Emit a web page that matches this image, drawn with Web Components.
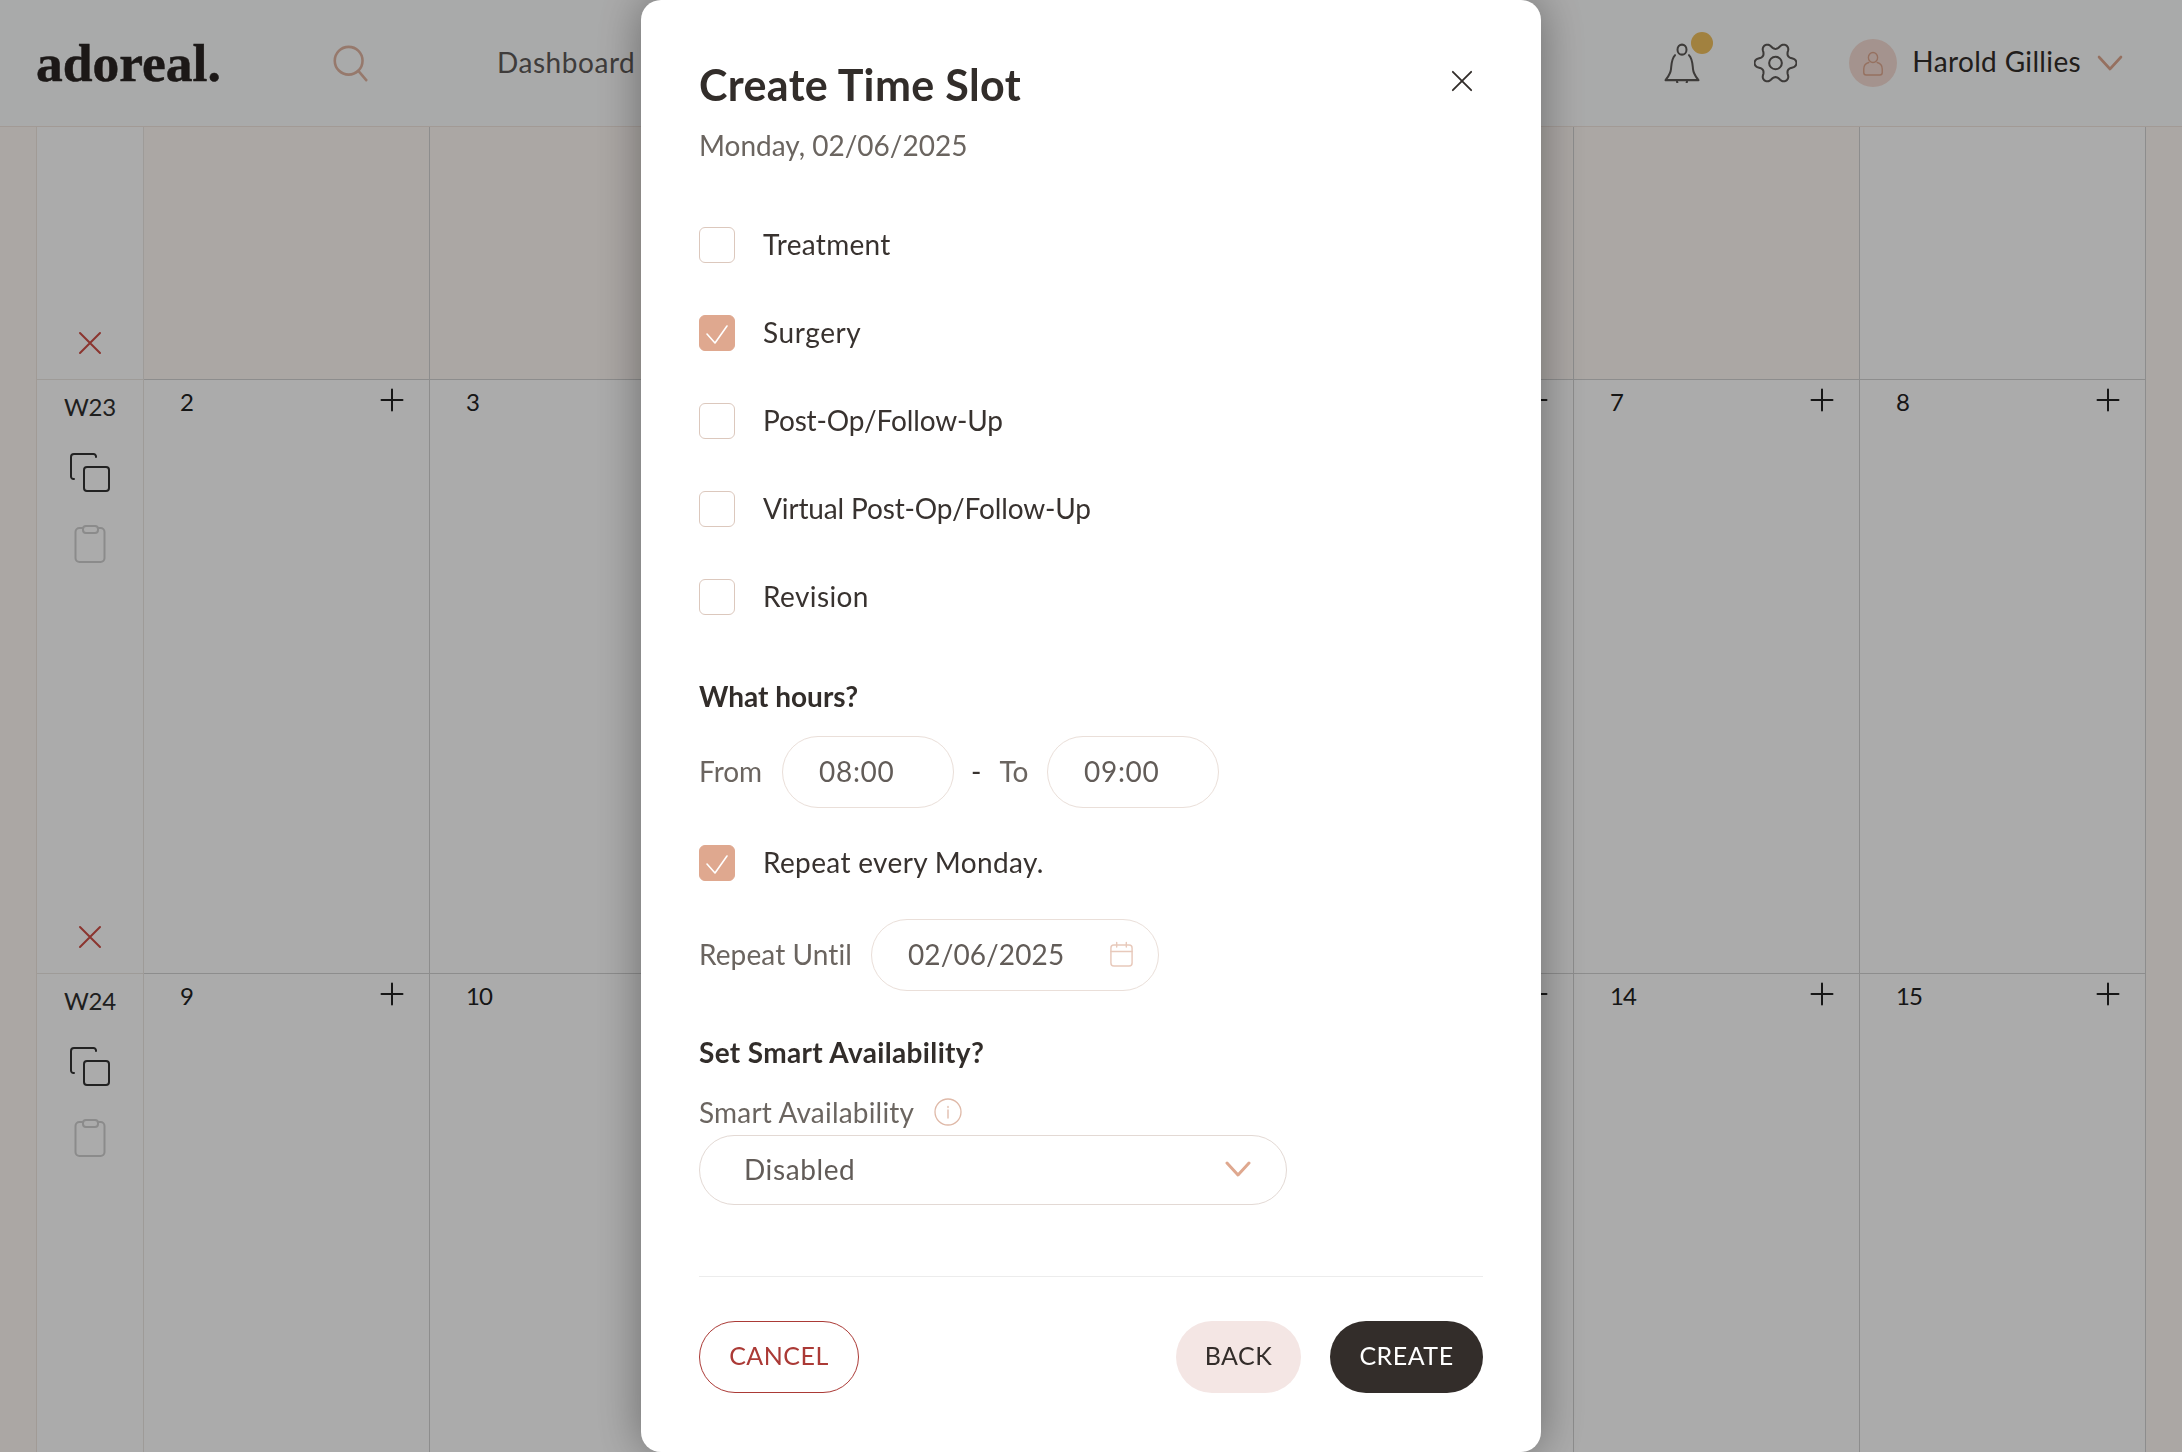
<!DOCTYPE html>
<html lang="en">
<head>
<meta charset="utf-8">
<title>Create Time Slot</title>
<style>
    html, body { margin: 0; padding: 0; background: #fff; height: 1452px; overflow: hidden; }
    body { width: 2182px; font-family: Lato, "Open Sans", sans-serif; color: #35302d; }
</style>
</head>
<body>
<app-header></app-header>
<cal-grid>
    <cal-strip></cal-strip>
    <cal-strip side="right"></cal-strip>

    <cal-week></cal-week>
    <cal-day past></cal-day><cal-day past></cal-day><cal-day past></cal-day><cal-day past></cal-day><cal-day past></cal-day><cal-day past></cal-day>
    <cal-day></cal-day>

    <cal-week label="W23"></cal-week>
    <cal-day num="2"></cal-day><cal-day num="3"></cal-day><cal-day num="4"></cal-day><cal-day num="5"></cal-day><cal-day num="6"></cal-day><cal-day num="7"></cal-day><cal-day num="8"></cal-day>

    <cal-week label="W24"></cal-week>
    <cal-day num="9"></cal-day><cal-day num="10"></cal-day><cal-day num="11"></cal-day><cal-day num="12"></cal-day><cal-day num="13"></cal-day><cal-day num="14"></cal-day><cal-day num="15"></cal-day>
</cal-grid>
<slot-modal></slot-modal>

<script>
function gearPath() {
    // wavy six lobe outline, same as the settings icon
    let d = '';
    for (let i = 0; i <= 120; i++) {
        const a = i / 120 * Math.PI * 2;
        const c = Math.cos(6 * a);
        const r = 17.3 + 3.2 * Math.sign(c) * Math.pow(Math.abs(c), 0.7);
        d += (i ? 'L' : 'M') + (21 + r * Math.cos(a)).toFixed(2) + ' ' + (21 + r * Math.sin(a)).toFixed(2);
    }
    return d + 'Z';
}

const ICONS = {
    search: [40, '<circle cx="18" cy="17" r="15"/><path d="M28.5 28 37 38"/>'],
    bell: [36, '<circle cx="18" cy="6" r="4.5"/><path d="M11 11C7.500 14 7.500 19 7 23.500 6.500 28 3.500 31 1.500 33.500H34.500C32.500 31 29.500 28 29 23.500 28.500 19 28.500 14 25 11"/><path d="M13 34a5 5 0 0 0 10 0"/>'],
    gear: [42, '<path d="' + gearPath() + '"/><circle cx="21" cy="21" r="6.200"/>'],
    user: [26, '<circle cx="13" cy="7.500" r="5"/><path d="M8.500 12.500C4 13.500 3 16 3 19v3.500A2.500 2.500 0 0 0 5.500 25h15a2.500 2.500 0 0 0 2.500-2.500V19c0-3-1-5.500-5.500-6.500"/>'],
    chevron: [26, '<path d="M2 7 13 19 24 7"/>'],
    close: [24, '<path d="M2 2 22 22M22 2 2 22"/>'],
    plus: [24, '<path d="M12 1.500V22.500M1.500 12H22.500"/>'],
    copy: [40, '<path d="M26 5V4.500A2.500 2.500 0 0 0 23.500 2H4A3 3 0 0 0 1 5V24.500A2.500 2.500 0 0 0 3.500 27H4"/><rect x="14" y="15" width="25" height="24" rx="3"/>'],
    clipboard: [40, '<rect x="5.500" y="4" width="29" height="34" rx="4"/><rect x="13" y="2" width="15" height="7" rx="3" fill="#fff"/>'],
    check: [36, '<path d="M8 19 16 28 28 11"/>'],
    calendar: [26, '<rect x="2" y="4" width="22" height="21" rx="3"/><path d="M2 10.500H24M8 1.500V6M18 1.500V6"/>'],
    info: [28, '<circle cx="14" cy="14" r="13"/><path d="M14 12V20M14 8.500V9.500"/>']
};

class UiIcon extends HTMLElement {
    connectedCallback() {
        const [box, body] = ICONS[this.getAttribute('name')];
        const w = this.getAttribute('w') || box;
        const h = this.getAttribute('h') || w;
        const sw = this.getAttribute('sw') || 2;
        this.attachShadow({ mode: 'open' }).innerHTML = `
            <style>
                :host { display: inline-flex; flex: none; color: ${this.getAttribute('color') || 'currentColor'}; }
                svg { display: block; fill: none; stroke: currentColor; stroke-linecap: round; stroke-linejoin: round; }
            </style>
            <svg width="${w}" height="${h}" viewBox="0 0 ${box} ${box}" preserveAspectRatio="none" stroke-width="${sw}">${body}</svg>`;
    }
}
customElements.define('ui-icon', UiIcon);

class AppHeader extends HTMLElement {
    constructor() {
        super();
        this.attachShadow({ mode: 'open' }).innerHTML = `
            <style>
                :host { display: flex; align-items: center; box-sizing: border-box; height: 127px; padding: 0 59px 0 36px; background: #fdfefe; border-bottom: 1px solid #f2e6df; }
                .logo { font: 700 53.500px/1 "Liberation Serif", serif; color: #2a2523; -webkit-text-stroke: .5px #2a2523; width: 183px; white-space: nowrap; padding-top: 2px; }
                .search { margin-left: 113px; }
                .nav { margin-left: 128px; font-size: 28px; letter-spacing: .55px; color: #5e5a58; padding-bottom: 3px; }
                .right { margin-left: auto; display: flex; align-items: center; }
                .bell { position: relative; display: flex; }
                .dot { position: absolute; left: 27px; top: -11px; width: 22px; height: 22px; border-radius: 50%; background: #f0c05f; }
                .gear { margin-left: 54px; }
                .avatar { margin-left: 52px; width: 48px; height: 48px; border-radius: 50%; background: #f5dcd4; display: flex; align-items: center; justify-content: center; }
                .name { margin-left: 15px; font-size: 28px; letter-spacing: .35px; color: #322d2a; padding-bottom: 5px; }
                .chev { margin-left: 16px; }
            </style>
            <div class="logo">adoreal.</div>
            <ui-icon class="search" name="search" w="37" h="37" sw="2.800" color="#e0b5a2"></ui-icon>
            <div class="nav">Dashboard</div>
            <div class="right">
                <div class="bell"><ui-icon name="bell" w="36" h="40" color="#5c5856"></ui-icon><span class="dot"></span></div>
                <ui-icon class="gear" name="gear" w="43" h="42" color="#5c5856"></ui-icon>
                <div class="avatar"><ui-icon name="user" w="24" h="26" sw="1.500" color="#dfa88f"></ui-icon></div>
                <div class="name">Harold Gillies</div>
                <ui-icon class="chev" name="chevron" w="26" h="26" sw="2.600" color="#dfa88f"></ui-icon>
            </div>`;
    }
}
customElements.define('app-header', AppHeader);

class CalGrid extends HTMLElement {
    constructor() {
        super();
        this.attachShadow({ mode: 'open' }).innerHTML = `
            <style>
                :host { display: grid; height: 1325px; overflow: hidden; grid-template-columns: 37px 107px repeat(7, 286px) 36px; grid-template-rows: 253px 594px 594px; }
            </style>
            <slot></slot>`;
    }
}
customElements.define('cal-grid', CalGrid);

class CalStrip extends HTMLElement {
    constructor() {
        super();
        this.attachShadow({ mode: 'open' }).innerHTML = `
            <style>
                :host { display: block; grid-row: 1 / 4; grid-column: 1; background: #fff9f5; border-right: 1px solid #f0e7e0; }
                :host([side="right"]) { grid-column: 10; border-right: 0; }
            </style>`;
    }
}
customElements.define('cal-strip', CalStrip);

class CalWeek extends HTMLElement {
    connectedCallback() {
        const label = this.getAttribute('label');
        this.attachShadow({ mode: 'open' }).innerHTML = `
            <style>
                :host { display: flex; flex-direction: column; align-items: center; box-sizing: border-box; padding: 11px 0 24px; background: #fff; border-right: 1px solid #ece7e3; border-bottom: 1px solid #ece7e3; }
                .label { font-size: 24px; line-height: 32px; letter-spacing: -.2px; color: #2f2f2f; }
                .copy { margin-top: 29px; }
                .paste { margin-top: 32px; }
                .del { margin-top: auto; }
            </style>
            ${label ? `<div class="label">${label}</div>
            <ui-icon class="copy" name="copy" w="40" h="40" color="#333"></ui-icon>
            <ui-icon class="paste" name="clipboard" w="40" h="40" color="#cfcfcf"></ui-icon>` : ''}
            <ui-icon class="del" name="close" w="24" h="24" color="#cf4f46"></ui-icon>`;
    }
}
customElements.define('cal-week', CalWeek);

class CalDay extends HTMLElement {
    connectedCallback() {
        const num = this.getAttribute('num');
        this.attachShadow({ mode: 'open' }).innerHTML = `
            <style>
                :host { display: flex; justify-content: space-between; align-items: flex-start; box-sizing: border-box; padding: 4px 25px 0 36px; background: #fff; border-right: 1px solid #d2d2d2; border-bottom: 1px solid #d2d2d2; }
                :host([past]) { background: #fff9f5; }
                .num { font-size: 24px; line-height: 36px; letter-spacing: -1px; color: #222; }
                ui-icon { margin-top: 4px; }
            </style>
            ${num ? `<div class="num">${num}</div><ui-icon name="plus" w="24" h="24" color="#222"></ui-icon>` : ''}`;
    }
}
customElements.define('cal-day', CalDay);

class CheckRow extends HTMLElement {
    connectedCallback() {
        const on = this.hasAttribute('checked');
        this.attachShadow({ mode: 'open' }).innerHTML = `
            <style>
                :host { display: flex; align-items: center; height: 36px; font-size: 28px; color: #38322f; }
                .box { box-sizing: border-box; width: 36px; height: 36px; border-radius: 6px; border: 1px solid #dcc8bd; background: #fff; display: flex; }
                .box.on { background: #dfa88f; border-color: #dfa88f; }
                .text { margin-left: 28px; padding-bottom: 2px; }
                ui-icon { margin: -1px; }
            </style>
            <span class="box ${on ? 'on' : ''}">${on ? '<ui-icon name="check" w="36" h="36" sw="1.600" color="#fff"></ui-icon>' : ''}</span>
            <span class="text"><slot></slot></span>`;
    }
}
customElements.define('check-row', CheckRow);

class PillField extends HTMLElement {
    constructor() {
        super();
        this.attachShadow({ mode: 'open' }).innerHTML = `
            <style>
                :host { display: flex; align-items: center; justify-content: space-between; box-sizing: border-box; height: 72px; padding: 0 24px 3px 36px; border: 1px solid #eadfd9; border-radius: 36px; background: #fff; font-size: 28px; letter-spacing: .7px; color: #625c58; }
            </style>
            <span><slot></slot></span>
            <slot name="icon"></slot>`;
    }
}
customElements.define('pill-field', PillField);

class ActionButton extends HTMLElement {
    constructor() {
        super();
        this.attachShadow({ mode: 'open' }).innerHTML = `
            <style>
                :host { display: inline-flex; align-items: center; justify-content: center; box-sizing: border-box; height: 72px; padding-bottom: 5px; border-radius: 36px; font-size: 25px; letter-spacing: .5px; }
                :host([kind="cancel"]) { width: 160px; border: 1px solid #ab3a36; color: #ab3a36; background: #fff; }
                :host([kind="back"]) { width: 125px; background: #f4e6e4; color: #332d2a; }
                :host([kind="create"]) { width: 153px; margin-left: 29px; background: #332d2a; color: #fff; }
            </style>
            <slot></slot>`;
    }
}
customElements.define('action-button', ActionButton);

class SlotModal extends HTMLElement {
    constructor() {
        super();
        this.attachShadow({ mode: 'open' }).innerHTML = `
            <style>
                :host { position: fixed; inset: 0; display: flex; justify-content: center; background: rgba(0, 0, 0, .33); }
                .panel { box-sizing: border-box; width: 900px; height: 1452px; padding: 65px 58px 0; background: #fff; border-radius: 20px; box-shadow: 0 0 46px rgba(0, 0, 0, .38); }
                .top { display: flex; justify-content: space-between; align-items: flex-start; }
                h1 { margin: 0; font-size: 43px; line-height: 40px; font-weight: 700; letter-spacing: .35px; color: #322d2a; }
                .close { margin: 5px 10px 0 0; }
                .sub { margin-top: 24px; font-size: 28px; line-height: 32px; color: #6b6560; }
                .checks { margin-top: 66px; display: flex; flex-direction: column; gap: 52px; }
                h2 { margin: 65px 0 0; padding-bottom: 1px; font-size: 28px; line-height: 32px; font-weight: 700; color: #322d2a; }
                .row { display: flex; align-items: center; font-size: 28px; color: #6b6560; }
                .row > span { padding-bottom: 3px; }
                .hours { margin-top: 23px; }
                .from { width: 83px; }
                .hours pill-field { width: 172px; }
                .dash { width: 93px; padding-left: 17px; box-sizing: border-box; color: #38322f; }
                .dash b { font-weight: 400; margin-right: 18px; }
                .repeat { margin-top: 37px; letter-spacing: .35px; }
                .until { margin-top: 38px; }
                .until .lab { width: 172px; letter-spacing: .1px; }
                .until pill-field { width: 288px; letter-spacing: .1px; }
                h2.smart { margin-top: 45px; padding-bottom: 0; letter-spacing: .35px; }
                .smart-label { margin-top: 28px; line-height: 32px; display: flex; align-items: center; font-size: 28px; letter-spacing: .2px; color: #6b6560; }
                .smart-label ui-icon { margin-left: 20px; }
                .select { margin-top: 7px; display: flex; align-items: center; justify-content: space-between; box-sizing: border-box; width: 588px; height: 70px; padding: 0 35px 3px 44px; border: 1px solid #e3d9d4; border-radius: 35px; font-size: 28px; letter-spacing: .6px; color: #625c58; }
                hr { margin: 71px 0 0; border: 0; border-top: 1px solid #ececec; }
                .actions { margin-top: 44px; display: flex; align-items: center; }
                .spacer { flex: 1; }
            </style>
            <div class="panel">
                <div class="top">
                    <h1>Create Time Slot</h1>
                    <ui-icon class="close" name="close" w="22" h="22" color="#322d2a"></ui-icon>
                </div>
                <div class="sub">Monday, 02/06/2025</div>
                <div class="checks">
                    <check-row style="letter-spacing:.3px">Treatment</check-row>
                    <check-row checked style="letter-spacing:.6px">Surgery</check-row>
                    <check-row style="letter-spacing:-.15px">Post-Op/Follow-Up</check-row>
                    <check-row style="letter-spacing:-.15px">Virtual Post-Op/Follow-Up</check-row>
                    <check-row style="letter-spacing:.4px">Revision</check-row>
                </div>
                <h2>What hours?</h2>
                <div class="row hours">
                    <span class="from">From</span>
                    <pill-field>08:00</pill-field>
                    <span class="dash"><b>-</b><span style="color:#6b6560">To</span></span>
                    <pill-field>09:00</pill-field>
                </div>
                <check-row class="repeat" checked>Repeat every Monday.</check-row>
                <div class="row until">
                    <span class="lab">Repeat Until</span>
                    <pill-field>02/06/2025<ui-icon slot="icon" name="calendar" w="25" h="26" sw="1.500" color="#e8c9bb"></ui-icon></pill-field>
                </div>
                <h2 class="smart">Set Smart Availability?</h2>
                <div class="smart-label">Smart Availability<ui-icon name="info" w="28" h="28" sw="1.300" color="#dfb9a8"></ui-icon></div>
                <div class="select">Disabled<ui-icon name="chevron" w="26" h="26" sw="3" color="#dfa88f"></ui-icon></div>
                <hr>
                <div class="actions">
                    <action-button kind="cancel">CANCEL</action-button>
                    <span class="spacer"></span>
                    <action-button kind="back">BACK</action-button>
                    <action-button kind="create">CREATE</action-button>
                </div>
            </div>`;
    }
}
customElements.define('slot-modal', SlotModal);
</script>
</body>
</html>
